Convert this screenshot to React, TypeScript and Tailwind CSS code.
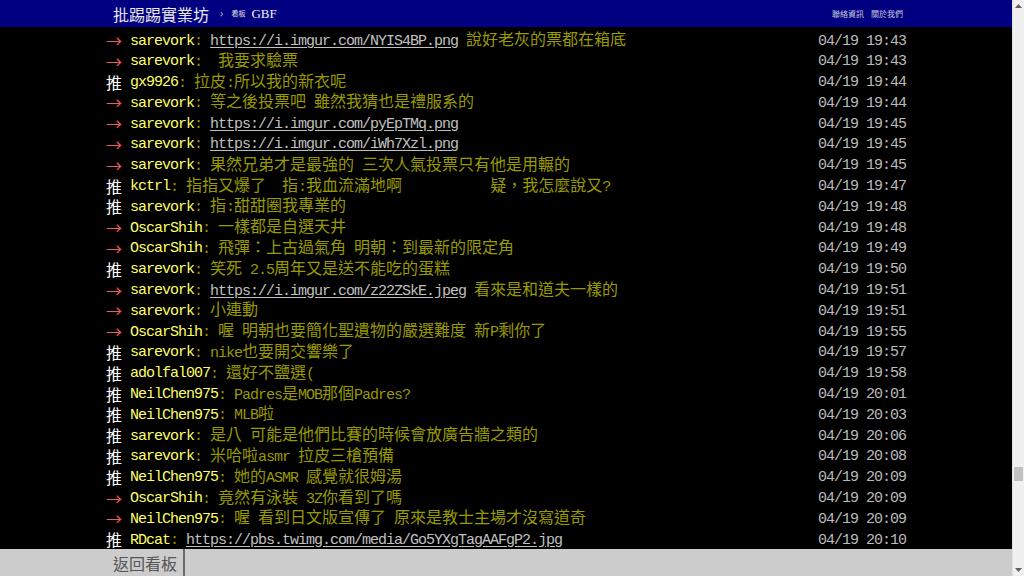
import React from "react"

type Row = [string, string, string, string]

const rows: Row[] = [
  ["→", "sarevork", ": https://i.imgur.com/NYIS4BP.png 說好老灰的票都在箱底", "04/19 19:43"],
  ["→", "sarevork", ":  我要求驗票", "04/19 19:43"],
  ["推", "gx9926", ": 拉皮:所以我的新衣呢", "04/19 19:44"],
  ["→", "sarevork", ": 等之後投票吧 雖然我猜也是禮服系的", "04/19 19:44"],
  ["→", "sarevork", ": https://i.imgur.com/pyEpTMq.png", "04/19 19:45"],
  ["→", "sarevork", ": https://i.imgur.com/iWh7Xzl.png", "04/19 19:45"],
  ["→", "sarevork", ": 果然兄弟才是最強的 三次人氣投票只有他是用輾的", "04/19 19:45"],
  ["推", "kctrl", ": 指指又爆了  指:我血流滿地啊           疑，我怎麼說又?", "04/19 19:47"],
  ["推", "sarevork", ": 指:甜甜圈我專業的", "04/19 19:48"],
  ["→", "OscarShih", ": 一樣都是自選天井", "04/19 19:48"],
  ["→", "OscarShih", ": 飛彈：上古過氣角 明朝：到最新的限定角", "04/19 19:49"],
  ["推", "sarevork", ": 笑死 2.5周年又是送不能吃的蛋糕", "04/19 19:50"],
  ["→", "sarevork", ": https://i.imgur.com/z22ZSkE.jpeg 看來是和道夫一樣的", "04/19 19:51"],
  ["→", "sarevork", ": 小連動", "04/19 19:51"],
  ["→", "OscarShih", ": 喔 明朝也要簡化聖遺物的嚴選難度 新P剩你了", "04/19 19:55"],
  ["推", "sarevork", ": nike也要開交響樂了", "04/19 19:57"],
  ["推", "adolfal007", ": 還好不鹽選(", "04/19 19:58"],
  ["推", "NeilChen975", ": Padres是MOB那個Padres?", "04/19 20:01"],
  ["推", "NeilChen975", ": MLB啦", "04/19 20:03"],
  ["推", "sarevork", ": 是八 可能是他們比賽的時候會放廣告牆之類的", "04/19 20:06"],
  ["推", "sarevork", ": 米哈啦asmr 拉皮三槍預備", "04/19 20:08"],
  ["推", "NeilChen975", ": 她的ASMR 感覺就很姆湯", "04/19 20:09"],
  ["→", "OscarShih", ": 竟然有泳裝 3Z你看到了嗎", "04/19 20:09"],
  ["→", "NeilChen975", ": 喔 看到日文版宣傳了 原來是教士主場才沒寫道奇", "04/19 20:09"],
  ["推", "RDcat", ": https://pbs.twimg.com/media/Go5YXgTagAAFgP2.jpg", "04/19 20:10"],
]

const mono = "font-['Liberation_Mono',monospace] text-[15px] tracking-[-1px]"
const cjk = "font-['Noto_Sans_CJK_TC','Noto_Sans_CJK_SC',sans-serif] text-[16px]"

// half-width runs in mono, everything else in the CJK face
function Txt({ s }: { s: string }) {
  const parts = s.split(/([\x20-\x7e]+)/).filter(Boolean)
  return (
    <>
      {parts.map((p, i) => (
        <span key={i} className={p.charCodeAt(0) < 128 ? mono : cjk}>
          {p}
        </span>
      ))}
    </>
  )
}

function Content({ s }: { s: string }) {
  const parts = s.split(/(https?:\/\/\S+)/)
  return (
    <span className="text-[#999900]">
      {parts.map((p, i) =>
        /^https?:/.test(p) ? (
          <a key={i} className="text-[#c0c0c0] underline underline-offset-2">
            <Txt s={p} />
          </a>
        ) : (
          <Txt key={i} s={p} />
        )
      )}
    </span>
  )
}

function Scrollbar() {
  return (
    <div className="flex w-[12px] flex-col items-center border-l border-[#e2e2e2] bg-[#f0f0f0]">
      <div className="flex h-[12px] items-center justify-center">
        <svg width="7" height="4" viewBox="0 0 7 4">
          <path d="M3.5 0L7 4H0z" fill="#606060" />
        </svg>
      </div>
      <div className="flex-1">
        <div className="mt-[455px] h-[14px] w-[9px] bg-[#c2c2c2]" />
      </div>
      <div className="flex h-[12px] items-center justify-center">
        <svg width="7" height="4" viewBox="0 0 7 4">
          <path d="M0 0h7L3.5 4z" fill="#606060" />
        </svg>
      </div>
    </div>
  )
}

export default function App() {
  return (
    <div className="flex h-[576px] w-[1024px] overflow-hidden bg-black">
      <div className="flex flex-1 flex-col">
        <div className="h-[27px] bg-[#000080]">
          <div className="mx-auto flex h-full w-[800px] items-center pl-[7px] pr-[3px]">
            <span className={`${cjk} text-[#e8e8e8]`}>批踢踢實業坊</span>
            <span className="ml-[11px] text-[11px] text-[#b0b0c8]">›</span>
            <span className="ml-[8px] font-['Noto_Sans_CJK_TC',sans-serif] text-[7px] text-[#e0e0e0]">看板</span>
            <span className="ml-[6px] font-['Liberation_Serif',serif] text-[13px] text-[#f0f0f0]">GBF</span>
            <div className="ml-auto flex gap-[7px] font-['Noto_Sans_CJK_TC',sans-serif] text-[8px] text-[#c8c8dc]">
              <span>聯絡資訊</span>
              <span>關於我們</span>
            </div>
          </div>
        </div>

        <div className="flex-1 overflow-hidden pt-[3px]">
          <div className="mx-auto w-[800px]">
            {rows.map(([tag, user, text, time], i) => (
              <div key={i} className="flex h-[20.8px] items-center whitespace-pre leading-[20.8px]">
                <span className={`${cjk} w-[24px] ${tag === "推" ? "text-white" : "text-[#f05a5a]"}`}>{tag}</span>
                <span className="text-[#ffff66]">
                  <Txt s={user} />
                </span>
                <Content s={text} />
                <span className="ml-auto text-[#bbbbbb]">
                  <Txt s={time} />
                </span>
              </div>
            ))}
          </div>
        </div>

        <div className="h-[27px] bg-[#cccccc]">
          <div className="mx-auto flex h-full w-[800px]">
            <a className={`${cjk} flex items-center border-r-2 border-[#6a6a6a] pl-[7px] pr-[6px] text-[#555555]`}>
              返回看板
            </a>
          </div>
        </div>
      </div>
      <Scrollbar />
    </div>
  )
}
